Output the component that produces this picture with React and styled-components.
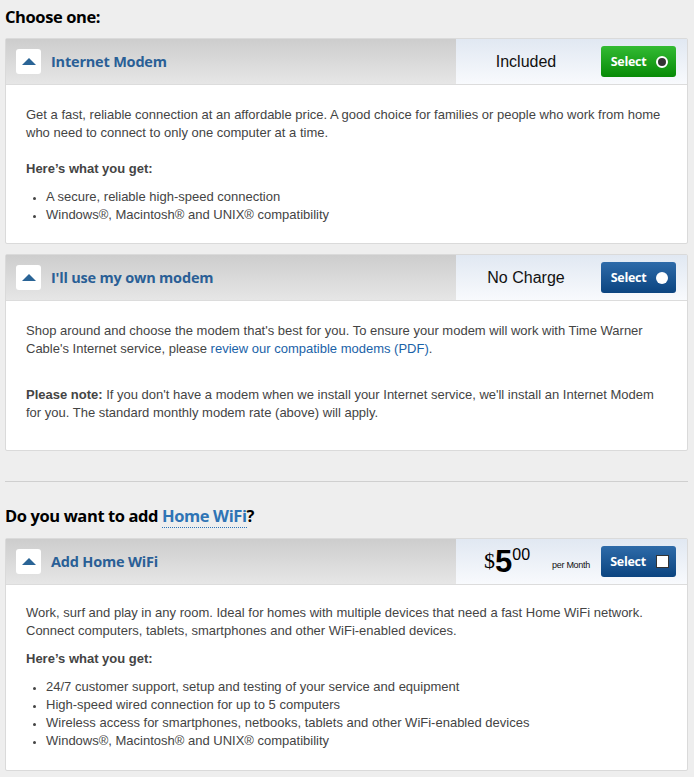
import React from "react";
import styled, { createGlobalStyle } from "styled-components";

const GlobalStyle = createGlobalStyle`
  html, body {
    margin: 0;
    padding: 0;
    background: #eeeeee;
  }
  body {
    font-family: "Liberation Sans", Arial, sans-serif;
  }
`;

const Page = styled.div`
  width: 683px;
  padding: 6px 6px 10px 5px;
`;

const SectionTitle = styled.h2`
  margin: 0 0 ${(p) => p.$space || 10}px 0;
  font-family: "Open Sans", "DejaVu Sans", sans-serif;
  font-size: 16.5px;
  font-weight: 700;
  letter-spacing: -0.4px;
  line-height: 22px;
  color: #000;
`;

const WifiLink = styled.a`
  color: #2f74b5;
  text-decoration: none;
  border-bottom: 1px dotted #2f74b5;
`;

const Card = styled.div`
  background: #fff;
  border: 1px solid #dadada;
  border-radius: 2px;
  margin-bottom: ${(p) => p.$gap || 0}px;
`;

const Header = styled.div`
  display: flex;
  height: 45px;
  border-bottom: 1px solid #dcdcdc;
`;

const HeaderLeft = styled.div`
  flex: 1;
  display: flex;
  align-items: center;
  gap: 10px;
  padding-left: 10px;
  background: linear-gradient(to bottom, #cdcdcd 0%, #e6e6e6 100%);
`;

const Toggle = styled.div`
  width: 25px;
  height: 25px;
  border-radius: 3px;
  background: #fff;
  display: flex;
  align-items: center;
  justify-content: center;
`;

const Arrow = styled.span`
  width: 0;
  height: 0;
  border-left: 7px solid transparent;
  border-right: 7px solid transparent;
  border-bottom: 7px solid #2a6496;
  margin-top: -1px;
`;

const CardTitle = styled.span`
  font-family: "Open Sans", "DejaVu Sans", sans-serif;
  font-size: 14.5px;
  font-weight: 700;
  letter-spacing: -0.2px;
  color: #2a5f96;
`;

const HeaderRight = styled.div`
  width: 231px;
  display: flex;
  align-items: center;
  padding-right: 11px;
  box-sizing: border-box;
  background: linear-gradient(to bottom, #e1e8f2 0%, #f8fafd 100%);
`;

const PriceLabel = styled.div`
  flex: 1;
  display: flex;
  align-items: center;
  justify-content: center;
  font-size: 16px;
  color: #111;
  padding: 0 5px 0 ${(p) => p.$shift || 0}px;
`;

const Price = styled.span`
  display: flex;
  align-items: flex-start;
  color: #000;
  line-height: 1;
  margin-right: 22px;
`;

const Dollar = styled.span`
  font-family: "Liberation Serif", serif;
  font-size: 22px;
  margin-top: 4px;
`;

const Whole = styled.span`
  font-family: "Liberation Sans", Arial, sans-serif;
  font-size: 31px;
  font-weight: 700;
`;

const Cents = styled.span`
  font-family: "Liberation Sans", Arial, sans-serif;
  font-size: 16px;
  margin-top: 1px;
`;

const PerMonth = styled.span`
  font-size: 9px;
  letter-spacing: -0.3px;
  color: #111;
  margin-top: 6px;
`;

const SelectButton = styled.button`
  width: 75px;
  height: 31px;
  border: 0;
  border-radius: 3px;
  display: flex;
  align-items: center;
  justify-content: center;
  gap: 10px;
  padding: 0 0 0 2px;
  font-family: "Open Sans", "DejaVu Sans", sans-serif;
  font-size: 12.5px;
  font-weight: 700;
  letter-spacing: -0.3px;
  color: #fff;
  background: ${(p) =>
    p.$green
      ? "linear-gradient(to bottom, #33bb33 0%, #078a07 100%)"
      : "linear-gradient(to bottom, #2e6ba9 0%, #0b4480 100%)"};
`;

const Radio = styled.span`
  width: 12px;
  height: 12px;
  border-radius: 50%;
  box-sizing: border-box;
  background: ${(p) => (p.$checked ? "#333" : "#fff")};
  border: ${(p) => (p.$checked ? "2.5px solid #fff" : "0")};
`;

const Check = styled.span`
  width: 13px;
  height: 13px;
  box-sizing: border-box;
  background: #fff;
  border: 1px solid #333;
`;

const Body = styled.div`
  padding: ${(p) => p.$top || 21}px 20px ${(p) => p.$bottom || 20}px 20px;
  font-size: 13px;
  line-height: 18px;
  color: #444;
`;

const Para = styled.p`
  margin: 0 0 ${(p) => p.$space}px 0;
`;

const Lead = styled.p`
  margin: 0 0 10px 0;
  font-weight: 700;
`;

const List = styled.ul`
  margin: 0;
  padding-left: 20px;
  li::marker {
    font-size: 11px;
  }
`;

const InlineLink = styled.a`
  color: #1a62a8;
  text-decoration: none;
`;

const Divider = styled.hr`
  border: 0;
  border-top: 1px solid #cfcfcf;
  margin: 30px 0 23px 0;
`;

const CardHeader = ({ title, children }) => (
  <Header>
    <HeaderLeft>
      <Toggle>
        <Arrow />
      </Toggle>
      <CardTitle>{title}</CardTitle>
    </HeaderLeft>
    <HeaderRight>{children}</HeaderRight>
  </Header>
);

const App = () => {
  return (
    <Page>
      <GlobalStyle />
      <SectionTitle>Choose one:</SectionTitle>

      <Card $gap={10}>
        <CardHeader title="Internet Modem">
          <PriceLabel>Included</PriceLabel>
          <SelectButton $green>
            Select <Radio $checked />
          </SelectButton>
        </CardHeader>
        <Body $bottom={19}>
          <Para $space={18}>
            Get a fast, reliable connection at an affordable price. A good choice for families or people who work from home
            who need to connect to only one computer at a time.
          </Para>
          <Lead>Here’s what you get:</Lead>
          <List>
            <li>A secure, reliable high-speed connection</li>
            <li>Windows®, Macintosh® and UNIX® compatibility</li>
          </List>
        </Body>
      </Card>

      <Card>
        <CardHeader title="I'll use my own modem">
          <PriceLabel>No Charge</PriceLabel>
          <SelectButton>
            Select <Radio />
          </SelectButton>
        </CardHeader>
        <Body $bottom={28}>
          <Para $space={28}>
            Shop around and choose the modem that's best for you. To ensure your modem will work with Time Warner
            Cable's Internet service, please <InlineLink href="#">review our compatible modems (PDF)</InlineLink>.
          </Para>
          <Para $space={0}>
            <b>Please note:</b> If you don't have a modem when we install your Internet service, we'll install an Internet Modem
            for you. The standard monthly modem rate (above) will apply.
          </Para>
        </Body>
      </Card>

      <Divider />

      <SectionTitle $space={11}>
        Do you want to add <WifiLink href="#">Home WiFi</WifiLink>?
      </SectionTitle>

      <Card>
        <CardHeader title="Add Home WiFi">
          <PriceLabel $shift={22}>
            <Price>
              <Dollar>$</Dollar>
              <Whole>5</Whole>
              <Cents>00</Cents>
            </Price>
            <PerMonth>per Month</PerMonth>
          </PriceLabel>
          <SelectButton>
            Select <Check />
          </SelectButton>
        </CardHeader>
        <Body $top={19}>
          <Para $space={10}>
            Work, surf and play in any room. Ideal for homes with multiple devices that need a fast Home WiFi network.
            Connect computers, tablets, smartphones and other WiFi-enabled devices.
          </Para>
          <Lead>Here’s what you get:</Lead>
          <List>
            <li>24/7 customer support, setup and testing of your service and equipment</li>
            <li>High-speed wired connection for up to 5 computers</li>
            <li>Wireless access for smartphones, netbooks, tablets and other WiFi-enabled devices</li>
            <li>Windows®, Macintosh® and UNIX® compatibility</li>
          </List>
        </Body>
      </Card>
    </Page>
  );
};

export default App;
